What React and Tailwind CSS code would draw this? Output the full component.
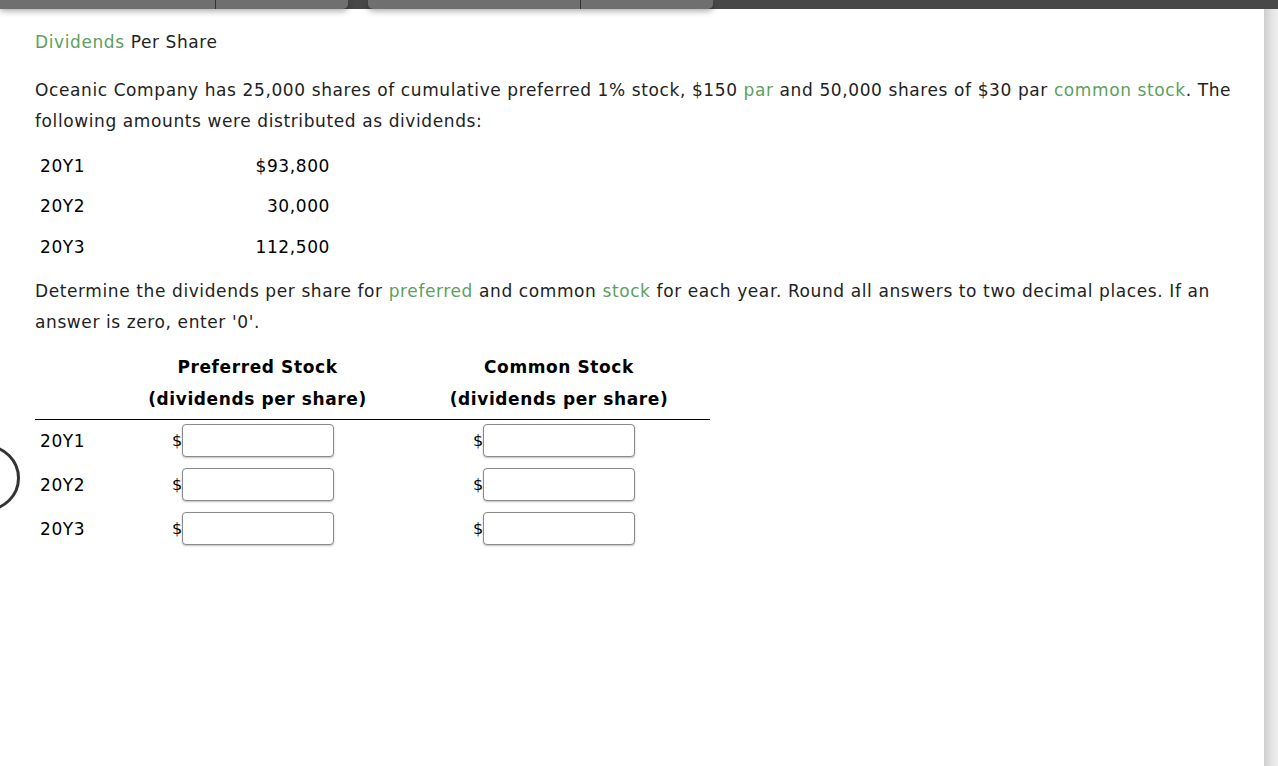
import React from "react";

const years = [
  { year: "20Y1", amount: "$93,800" },
  { year: "20Y2", amount: "30,000" },
  { year: "20Y3", amount: "112,500" },
];

function Link({ children }) {
  return <span className="text-[#5d9f5d]">{children}</span>;
}

function MoneyInput() {
  return (
    <div className="flex items-center">
      <span className="w-[10px] pt-[2px] text-[16px] tracking-normal text-black">$</span>
      <input
        type="text"
        className="h-[33px] w-[152px] rounded-[4px] border border-[#8a8a8a] bg-white shadow-[0_1px_2px_rgba(0,0,0,0.25)] outline-none"
      />
    </div>
  );
}

export default function App() {
  return (
    <div className="relative flex h-[766px] w-[1278px] flex-col overflow-hidden bg-white font-['DejaVu_Sans',Verdana,sans-serif] text-[#222]">
      {/* top tab strip */}
      <div className="flex h-[9px] shrink-0 bg-[#484848]">
        <div className="flex h-full w-[348px] rounded-br-[5px] bg-[#6f6f6f] shadow-[0_2px_6px_rgba(0,0,0,0.35)]">
          <div className="h-full w-[216px] border-r border-[#333]" />
        </div>
        <div className="ml-[20px] flex h-full w-[345px] rounded-b-[5px] bg-[#6f6f6f] shadow-[0_2px_6px_rgba(0,0,0,0.35)]">
          <div className="h-full w-[213px] border-r border-[#333]" />
        </div>
      </div>

      <div className="flex flex-1">
        <main className="flex-1 pl-[35px] pt-[21px] text-[17px] tracking-[0.6px]">
          <h1 className="leading-[24px]">
            <Link>Dividends</Link> Per Share
          </h1>

          <p className="mt-[21px] pr-[10px] leading-[31px]">
            Oceanic Company has 25,000 shares of cumulative preferred 1% stock, $150 <Link>par</Link> and 50,000 shares of $30 par{" "}
            <Link>common stock</Link>. The following amounts were distributed as dividends:
          </p>

          <div className="mt-[9px] flex w-[295px] flex-col text-black">
            {years.map((r) => (
              <div key={r.year} className="flex h-[40.5px] items-center justify-between pl-[5px]">
                <span>{r.year}</span>
                <span>{r.amount}</span>
              </div>
            ))}
          </div>

          <p className="mt-[8px] pr-[50px] leading-[31px]">
            Determine the dividends per share for <Link>preferred</Link> and common <Link>stock</Link> for each year. Round all
            answers to two decimal places. If an answer is zero, enter '0'.
          </p>

          <div className="mt-[13px] w-[675px] text-black">
            <div className="flex border-b border-black pb-[4px] font-bold leading-[32px]">
              <div className="w-[113px]" />
              <div className="w-[219px] text-center">
                <div>Preferred Stock</div>
                <div>(dividends per share)</div>
              </div>
              <div className="ml-[82px] w-[220px] text-center">
                <div>Common Stock</div>
                <div>(dividends per share)</div>
              </div>
            </div>
            <div className="flex flex-col gap-[11px] pt-[4px]">
              {years.map((r) => (
                <div key={r.year} className="flex items-center">
                  <div className="w-[137px] pl-[5px] pt-[3px]">{r.year}</div>
                  <MoneyInput />
                  <div className="w-[139px]" />
                  <MoneyInput />
                </div>
              ))}
            </div>
          </div>
        </main>

        {/* right edge strip */}
        <div className="w-[14px] shrink-0 bg-gradient-to-r from-[#cfcfcf] via-[#e2e2e2] to-[#efefef]" />
      </div>

      {/* partial circle on the left edge */}
      <div className="absolute left-[-46px] top-[445px] h-[66px] w-[66px] rounded-full border-[3px] border-[#333]" />
    </div>
  );
}
